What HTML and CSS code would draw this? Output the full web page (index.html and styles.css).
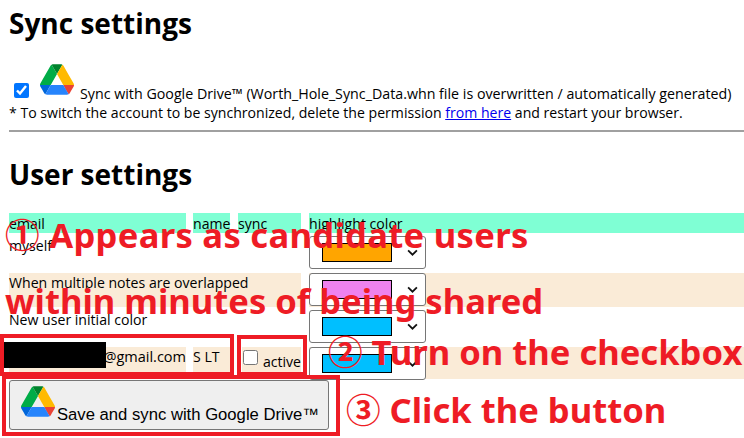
FILE: index.html
```html
<!DOCTYPE html>
<html lang="en">

<head>
    <meta charset="UTF-8">
    <title>Sync settings</title>
    <link rel="stylesheet" href="styles.css">
</head>

<body>
    <svg class="defs" width="0" height="0">
        <symbol id="drive" viewBox="0 0 87.3 78">
            <path d="m6.6 66.85 3.85 6.65c.8 1.4 1.95 2.5 3.3 3.3l13.75-23.8h-27.5c0 1.55.4 3.1 1.2 4.5z" fill="#0066da"/>
            <path d="m43.65 25-13.75-23.8c-1.35.8-2.5 1.9-3.3 3.3l-25.4 44a9.06 9.06 0 0 0 -1.2 4.5h27.5z" fill="#00ac47"/>
            <path d="m73.55 76.8c1.35-.8 2.5-1.9 3.3-3.3l1.6-2.75 7.65-13.25c.8-1.4 1.2-2.95 1.2-4.5h-27.502l5.852 11.5z" fill="#ea4335"/>
            <path d="m43.65 25 13.75-23.8c-1.35-.8-2.9-1.2-4.5-1.2h-18.5c-1.6 0-3.15.45-4.5 1.2z" fill="#00832d"/>
            <path d="m59.8 53h-32.3l-13.75 23.8c1.35.8 2.9 1.2 4.5 1.2h50.8c1.6 0 3.15-.45 4.5-1.2z" fill="#2684fc"/>
            <path d="m73.4 26.5-12.7-22c-.8-1.4-1.95-2.5-3.3-3.3l-13.75 23.8 16.15 28h27.45c0-1.55-.4-3.1-1.2-4.5z" fill="#ffba00"/>
        </symbol>
    </svg>

    <h1 class="title-sync">Sync settings</h1>
    <div class="sync-line">
        <input type="checkbox" class="sync-check" checked>
        <svg class="drive-icon"><use href="#drive"/></svg>
        <span>Sync with Google Drive™ (Worth_Hole_Sync_Data.whn file is overwritten / automatically generated)</span>
    </div>
    <div class="sync-note">* To switch the account to be synchronized, delete the permission <a href="#">from here</a> and restart your browser.</div>
    <hr>

    <h1 class="title-user">User settings</h1>
    <div class="user-table">
        <div class="cell head">email</div>
        <div class="cell head">name</div>
        <div class="cell head">sync</div>
        <div class="cell head">highlight color</div>

        <div class="cell wide">myself</div>
        <div class="cell color">
            <div class="picker"><span class="swatch orange"></span><svg class="arrow" viewBox="0 0 10 6"><path d="M1 1l4 4 4-4"/></svg></div>
        </div>

        <div class="cell wide peach">When multiple notes are overlapped</div>
        <div class="cell color peach">
            <div class="picker"><span class="swatch violet"></span><svg class="arrow" viewBox="0 0 10 6"><path d="M1 1l4 4 4-4"/></svg></div>
        </div>

        <div class="cell wide">New user initial color</div>
        <div class="cell color">
            <div class="picker"><span class="swatch blue"></span><svg class="arrow" viewBox="0 0 10 6"><path d="M1 1l4 4 4-4"/></svg></div>
        </div>

        <div class="cell peach email-cell"><span class="redact"></span>@gmail.com</div>
        <div class="cell peach">S LT</div>
        <div class="cell peach active-cell"><input type="checkbox" class="active-check"><span>active</span></div>
        <div class="cell color peach">
            <div class="picker"><span class="swatch blue"></span><svg class="arrow" viewBox="0 0 10 6"><path d="M1 1l4 4 4-4"/></svg></div>
        </div>
    </div>

    <button class="save-btn"><svg class="drive-icon"><use href="#drive"/></svg>Save and sync with Google Drive™</button>

    <!-- notes drawn over the screenshot -->
    <div class="note note-1">① Appears as candidate users</div>
    <div class="note note-1b">within minutes of being shared</div>
    <div class="note note-2">② Turn on the checkbox</div>
    <div class="note note-3">③ Click the button</div>
    <div class="red-box box-account"></div>
    <div class="red-box box-active"></div>
    <div class="red-box box-save"></div>
</body>

</html>
```

FILE: styles.css
```css
* {
    box-sizing: border-box;
}

html,
body {
    height: 438px;
    overflow: hidden;
}

body {
    position: relative;
    margin: 0;
    padding: 0 0 0 9px;
    font-family: "Open Sans", "Noto Sans", sans-serif;
    font-size: 14.1px;
    color: #000;
    background: #fff;
}

.defs {
    position: absolute;
}

h1 {
    margin: 0;
    font-size: 28px;
    line-height: 36px;
    font-weight: 700;
}

.title-sync {
    padding-top: 5px;
}

.sync-line {
    display: flex;
    align-items: flex-end;
    height: 42px;
    margin-top: 20px;
    font-size: 14.25px;
    line-height: 19px;
}

.sync-check {
    width: 15px;
    height: 15px;
    margin: 0 10px 5px 5px;
    accent-color: #0075ff;
}

.drive-icon {
    width: 34px;
    height: 31px;
    flex: none;
}

.sync-line .drive-icon {
    margin: 0 6px 8px 1px;
}

.sync-note {
    line-height: 20px;
}

hr {
    height: 2px;
    margin: 7px 0 0;
    border: 0;
    background: #a0a0a0;
}

.title-user {
    margin-top: 24px;
}

.user-table {
    display: grid;
    grid-template-columns: 176px 37px 63px 1fr;
    grid-template-rows: 20px 34px 34px 34px 32px;
    column-gap: 8px;
    row-gap: 3px;
    margin-top: 21px;
}

.cell {
    line-height: 19px;
    white-space: nowrap;
}

.head {
    background: #7fffd4;
    line-height: 20px;
    padding-top: 1px;
}

.user-table > .cell:first-child,
.email-cell {
    margin-right: -1px;
}

.wide {
    grid-column: 1 / 4;
}

.peach {
    background: #faebd7;
}

.color {
    padding: 0;
}

.picker {
    display: flex;
    align-items: center;
    justify-content: space-between;
    width: 117px;
    height: 33px;
    padding: 0 7px 0 12px;
    background: #fff;
    border: 1px solid #767676;
    border-radius: 3px;
}

.swatch {
    width: 70px;
    height: 19px;
    border: 1px solid #000;
}

.orange {
    background: #ffa500;
}

.violet {
    background: #ee82ee;
}

.blue {
    background: #00bfff;
}

.arrow {
    width: 11px;
    height: 7px;
    fill: none;
    stroke: #111;
    stroke-width: 1.6;
}

.email-cell {
    display: flex;
    justify-content: flex-end;
    font-size: 14.5px;
}

.redact {
    position: absolute;
    left: 4px;
    top: 342px;
    width: 102px;
    height: 26px;
    background: #000;
}

.active-cell {
    display: flex;
    align-items: flex-start;
    margin-left: 4px;
}

.active-check {
    width: 15px;
    height: 15px;
    margin: 3px 5px 0 1px;
}

.active-cell span {
    padding-top: 5px;
}

.save-btn {
    display: flex;
    align-items: flex-end;
    width: 320px;
    height: 50px;
    margin-top: 1px;
    padding: 0 0 5px 11px;
    font-family: "Liberation Sans", Arial, sans-serif;
    font-size: 16.67px;
    line-height: 18px;
    color: #000;
    background: #efefef;
    border: 1px solid #767676;
    border-radius: 3px;
}

.save-btn .drive-icon {
    margin: 0 2px 7px 0;
}

.note {
    position: absolute;
    font-family: "Noto Sans", "Noto Sans CJK JP", sans-serif;
    font-size: 34.6px;
    font-weight: 700;
    color: #ee1c25;
    white-space: nowrap;
    line-height: 44px;
}

.note-1 {
    left: 5px;
    top: 213px;
    letter-spacing: .3px;
}

.note-1b {
    left: 5px;
    top: 279px;
}

.note-2 {
    left: 328px;
    top: 330px;
}

.note-3 {
    left: 346px;
    top: 388px;
}

.red-box {
    position: absolute;
    border: 4px solid #ee1c25;
}

.box-account {
    left: 0;
    top: 334px;
    width: 234px;
    height: 42px;
}

.box-active {
    left: 237px;
    top: 335px;
    width: 70px;
    height: 41px;
}

.box-save {
    left: 2px;
    top: 375px;
    width: 338px;
    height: 61px;
}
```
